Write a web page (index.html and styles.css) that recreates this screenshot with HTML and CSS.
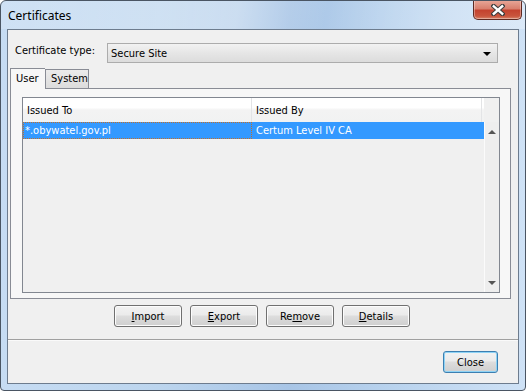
FILE: index.html
```html
<!DOCTYPE html>
<html lang="en">
<head>
    <meta charset="UTF-8">
    <title>Certificates</title>
    <link rel="stylesheet" href="styles.css">
</head>
<body>
    <div class="window">
        <div class="titlebar">
            <span class="title">Certificates</span>
            <button class="close-box" aria-label="Close">
                <svg width="14" height="12" viewBox="0 0 14 12">
                    <path d="M2.5 2 L11.5 10 M11.5 2 L2.5 10" stroke="#3d3d3d" stroke-width="4.4" stroke-linecap="square"/>
                    <path d="M2.8 2.3 L11.2 9.7 M11.2 2.3 L2.8 9.7" stroke="#fff" stroke-width="2.4" stroke-linecap="square"/>
                </svg>
            </button>
        </div>
        <div class="client">
            <div class="type-row">
                <label class="type-label">Certificate type:</label>
                <div class="combo">
                    <span>Secure Site</span>
                    <span class="combo-arrow"></span>
                </div>
            </div>

            <div class="tabs">
                <div class="tab active">User</div>
                <div class="tab">System</div>
            </div>

            <div class="panel">
                <div class="list">
                    <div class="list-head">
                        <div class="header">
                            <div class="col col-to">Issued To</div>
                            <div class="col col-by">Issued By</div>
                        </div>
                        <div class="corner"></div>
                    </div>
                    <div class="list-body">
                        <div class="rows">
                            <div class="row selected">
                                <div class="cell col-to focus">*.obywatel.gov.pl</div>
                                <div class="cell col-by">Certum Level IV CA</div>
                            </div>
                        </div>
                        <div class="scrollbar">
                            <span class="arrow up"></span>
                            <span class="arrow down"></span>
                        </div>
                    </div>
                </div>
            </div>

            <div class="actions">
                <button class="btn"><u>I</u>mport</button>
                <button class="btn"><u>E</u>xport</button>
                <button class="btn">Re<u>m</u>ove</button>
                <button class="btn"><u>D</u>etails</button>
            </div>

            <div class="separator"></div>

            <div class="footer">
                <button class="btn default">Close</button>
            </div>
        </div>
    </div>
</body>
</html>
```

FILE: styles.css
```css
html, body {
    margin: 0;
    padding: 0;
    background: #fff;
}

body {
    font-family: "DejaVu Sans Condensed", "DejaVu Sans", Tahoma, sans-serif;
    font-size: 11px;
    color: #000;
}

.window {
    width: 526px;
    height: 391px;
    box-sizing: border-box;
    border: 1px solid #4a5563;
    border-radius: 6px 6px 4px 4px;
    padding: 0 6px 6px 6px;
    display: flex;
    flex-direction: column;
    background: linear-gradient(to right, #c6dcf3 0%, #bcd5ee 30%, #a8c5e6 55%, #b9d3ee 75%, #cfe2f6 100%);
    overflow: hidden;
}

.titlebar {
    height: 28px;
    display: flex;
    align-items: flex-start;
    justify-content: space-between;
    background: linear-gradient(100deg, rgba(255,255,255,0.15) 0%, rgba(255,255,255,0.35) 45%, rgba(255,255,255,0) 62%, rgba(255,255,255,0.25) 85%);
    margin: 0 -6px;
    padding: 0 3px 0 7px;
}

.title {
    font-family: "Noto Sans", "DejaVu Sans", sans-serif;
    font-size: 12px;
    line-height: 12px;
    padding-top: 9px;
    color: #000;
}

.close-box {
    width: 49px;
    height: 20px;
    margin-top: -1px;
    border: 1px solid #5e2a22;
    border-top: none;
    border-radius: 0 0 5px 5px;
    background: linear-gradient(#e9a99a 0%, #d9806e 45%, #c4432f 55%, #c9553d 85%, #d8866c 100%);
    display: flex;
    align-items: center;
    justify-content: center;
    padding: 0;
    box-shadow: inset 0 0 0 1px rgba(255,255,255,0.35);
}

.client {
    flex: 1;
    border: 1px solid #6d7c8e;
    background: #f0f0f0;
    padding-top: 13px;
    display: flex;
    flex-direction: column;
}

.type-row {
    display: flex;
    align-items: center;
    height: 20px;
    padding-left: 7px;
}

.type-label {
    width: 92px;
    margin-top: -5px;
}

.combo {
    flex: 1;
    margin-right: 20px;
    height: 20px;
    box-sizing: border-box;
    border: 1px solid #acacac;
    background: linear-gradient(#f2f2f2, #e6e6e6 50%, #dcdcdc);
    display: flex;
    align-items: center;
    justify-content: space-between;
    padding: 0 6px 0 3px;
}

.combo-arrow {
    width: 0;
    height: 0;
    border-left: 4px solid transparent;
    border-right: 4px solid transparent;
    border-top: 4px solid #000;
    margin-top: 2px;
}

.tabs {
    display: flex;
    align-items: flex-end;
    margin: 5px 0 0 2px;
    height: 20px;
    position: relative;
    z-index: 1;
}

.tab {
    box-sizing: border-box;
    height: 19px;
    padding: 2px 5px 0 5px;
    border: 1px solid #898c95;
    border-bottom: none;
    background: linear-gradient(#ebebeb, #dcdcdc);
}

.tab.active {
    height: 21px;
    width: 35px;
    padding-top: 3px;
    background: #f7f7f7;
    margin-bottom: -1px;
    border-right: none;
}

.tab + .tab {
    width: 44px;
}

.panel {
    margin-left: 2px;
    width: 501px;
    height: 211px;
    box-sizing: border-box;
    border: 1px solid #898c95;
    background: #f7f7f7;
    padding: 8px 10px 5px 11px;
}

.list {
    height: 100%;
    box-sizing: border-box;
    border: 1px solid #828790;
    background: #f0f0f0;
    display: flex;
    flex-direction: column;
}

.list-head,
.list-body {
    display: flex;
}

.list-body {
    flex: 1;
}

.header {
    flex: 1;
    height: 24px;
    display: flex;
    background: linear-gradient(#ffffff 0%, #ffffff 40%, #f3f3f3 50%, #f1f2f2 100%);
}

.col {
    box-sizing: border-box;
    padding: 6px 0 0 4px;
    border-right: 1px solid #e3e4e6;
}

.col-to {
    width: 229px;
}

.col-by {
    width: 230px;
}

.corner {
    width: 15px;
}

.rows {
    flex: 1;
}

.row {
    display: flex;
    height: 17px;
}

.row.selected {
    background: #3399ff;
    color: #fff;
}

.cell {
    box-sizing: border-box;
    padding: 1px 0 0 1px;
    border: 1px solid transparent;
}

.cell.focus {
    border: 1px dotted #c0702c;
}

.cell.col-by {
    padding-left: 3px;
    flex: 1;
}

.scrollbar {
    width: 14px;
    border-left: 1px solid #fbfbfb;
    background: #eeeeee;
    display: flex;
    flex-direction: column;
    justify-content: space-between;
    align-items: center;
    padding: 8px 0 7px;
}

.arrow {
    width: 0;
    height: 0;
    border-left: 4px solid transparent;
    border-right: 4px solid transparent;
}

.arrow.up {
    border-bottom: 4px solid #555;
}

.arrow.down {
    border-top: 4px solid #555;
}

.actions {
    display: flex;
    gap: 8px;
    padding-left: 106px;
    margin-top: 6px;
}

.btn {
    font-family: "DejaVu Sans Condensed", "DejaVu Sans", Tahoma, sans-serif;
    font-size: 11px;
    width: 68px;
    height: 22px;
    padding: 0;
    border: 1px solid #707070;
    border-radius: 3px;
    background: linear-gradient(#f2f2f2 0%, #ebebeb 45%, #dddddd 50%, #cfcfcf 100%);
    box-shadow: inset 0 0 0 1px #fcfcfc;
    color: #000;
}

.separator {
    margin-top: 12px;
    height: 1px;
    background: #a0a0a0;
    border-bottom: 1px solid #fafafa;
}

.footer {
    display: flex;
    justify-content: flex-end;
    padding: 10px 20px 0 0;
}

.btn.default {
    width: 55px;
    border-color: #3c7fb1;
    box-shadow: inset 0 0 0 1px #8fd3f5;
}
```
